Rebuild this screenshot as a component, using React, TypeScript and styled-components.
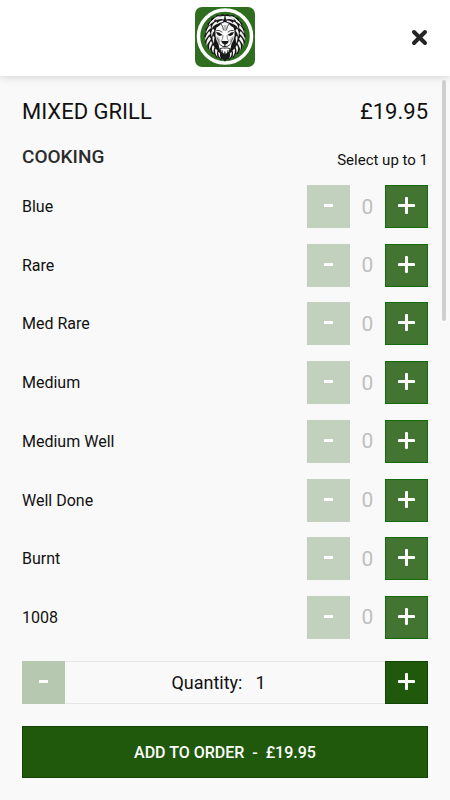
import React, { useState } from "react";
import styled, { createGlobalStyle } from "styled-components";

const GlobalStyle = createGlobalStyle`
  *, *::before, *::after { box-sizing: border-box; }
  body {
    margin: 0;
    background: #f9f9f9;
    color: #111;
    font-family: Roboto, "Liberation Sans", sans-serif;
  }
  h1, h2, p, ul { margin: 0; padding: 0; }
  button { font-family: inherit; cursor: pointer; }
  button:disabled { cursor: default; }
`;

const Page = styled.div`
  display: flex;
  flex-direction: column;
  min-height: 100vh;
`;

const Header = styled.header`
  display: grid;
  grid-template-columns: 1fr auto 1fr;
  align-items: center;
  padding: 7px 20px 9px;
  background: #fff;
  box-shadow: 0 1px 8px rgba(0, 0, 0, 0.16);
`;

const LogoLink = styled.a`
  grid-column: 2;
  display: block;
  height: 60px;
`;

const CloseButton = styled.button`
  justify-self: end;
  display: flex;
  padding: 2px;
  border: 0;
  background: none;
`;

const Content = styled.main`
  position: relative;
  flex: 1;
  display: flex;
  flex-direction: column;
  padding: 21px 22px 22px;
`;

const ScrollThumb = styled.div`
  position: absolute;
  top: 4px;
  right: 4px;
  width: 4px;
  height: 241px;
  border-radius: 2px;
  background: #cfcfcf;
`;

const HeadingRow = styled.div`
  display: flex;
  justify-content: space-between;
  align-items: flex-end;
`;

const ProductTitle = styled.h1`
  font-size: 22px;
  line-height: 30px;
  font-weight: 400;
`;

const Price = styled.p`
  font-size: 22px;
  line-height: 30px;
`;

const GroupRow = styled(HeadingRow)`
  padding: 15px 0 13px;
`;

const GroupTitle = styled.h2`
  font-size: 19px;
  line-height: 30px;
  font-weight: 500;
  color: #2c2c2c;
`;

const Hint = styled.p`
  font-size: 15px;
  line-height: 24px;
`;

const Options = styled.ul`
  flex: 1;
  display: flex;
  flex-direction: column;
  justify-content: space-between;
  gap: 12px;
  list-style: none;
`;

const Option = styled.li`
  display: grid;
  grid-template-columns: 1fr 43px 35px 43px;
  align-items: center;
  font-size: 16px;
`;

const Count = styled.output`
  text-align: center;
  font-size: 21px;
  color: #bfbfbf;
`;

type Tone = "soft" | "strong";

const fills = {
  soft: { on: "#437431", edge: "#126b0d", off: "#c2d1bd" },
  strong: { on: "#20590b", edge: "#104503", off: "#b6c9b0" },
};

const StepButton = styled.button<{ $tone: Tone }>`
  display: flex;
  align-items: center;
  justify-content: center;
  width: 43px;
  height: 43px;
  padding: 0 0 2px;
  border: 1px solid ${({ $tone }) => fills[$tone].edge};
  background: ${({ $tone }) => fills[$tone].on};
  color: #fff;

  &:disabled {
    border-color: ${({ $tone }) => fills[$tone].off};
    background: ${({ $tone }) => fills[$tone].off};
  }
`;

const Quantity = styled.div`
  display: grid;
  grid-template-columns: 43px 1fr 43px;
  margin-top: 22px;
`;

const QuantityLabel = styled.div`
  display: flex;
  align-items: center;
  justify-content: center;
  gap: 13px;
  padding-right: 13px;
  border: solid #e6e6e6;
  border-width: 1px 0;
  font-size: 18px;
`;

const AddButton = styled.button`
  height: 52px;
  margin-top: 22px;
  padding: 0;
  border: 1px solid #104503;
  background: #20590b;
  color: #fff;
  font-size: 16px;
  font-weight: 500;
  white-space: pre;
`;

const PlusIcon = () => (
  <svg width="17" height="17" viewBox="0 0 17 17" aria-hidden="true">
    <path d="M8.5 1.3V15.7M1.3 8.5H15.7" stroke="currentColor" strokeWidth="3" strokeLinecap="round" />
  </svg>
);

const MinusIcon = () => (
  <svg width="9" height="3" viewBox="0 0 9 3" aria-hidden="true">
    <path d="M0 0H9V3H0Z" fill="currentColor" />
  </svg>
);

const CloseIcon = () => (
  <svg width="17" height="17" viewBox="0 0 17 17" aria-hidden="true">
    <path d="M3 3L14 14M14 3L3 14" stroke="#242424" strokeWidth="4" strokeLinecap="round" />
  </svg>
);

const LionHalf = () => (
  <g>
    <path
      fill="#161616"
      d="M60 16L54 14L51 17L43 16L41 20L33 22L31 28L25 33L26 38L20 45L23 49L18 59L22 62L20 72L25 75L26 84L31 85L34 94L39 94L43 102L47 100L51 106L55 103L60 109Z"
    />
    <g fill="#f2f2f2">
      <path d="M59 18Q47 17 41 27Q50 22 58 25Z" />
      <path d="M50 18Q38 19 34 30Q41 24 47 22Z" />
      <path d="M39 24Q29 28 27 39Q32 32 38 29Z" />
      <path d="M31 36Q23 42 22 53Q27 45 32 42Z" />
      <path d="M29 48Q21 55 20 67Q26 57 31 53Z" />
      <path d="M29 59Q22 66 23 77Q28 69 32 64Z" />
      <path d="M32 68Q26 75 29 86Q32 77 35 72Z" />
      <path d="M36 76Q31 84 37 93Q37 84 39 80Z" />
      <path d="M41 83Q38 90 45 101Q43 91 45 87Z" />
      <path d="M46 90Q46 97 52 104Q49 96 50 92Z" />
      <path d="M57 27Q47 26 43 35Q50 30 56 30Z" />
      <path d="M43 29Q34 32 33 44Q38 36 45 33Z" />
      <path d="M36 43Q31 49 33 60Q36 50 39 47Z" />
      <path d="M36 57Q33 64 38 73Q38 65 39 61Z" />
    </g>
    <path
      fill="#fafafa"
      d="M60 30L53 33L48 38L43 41L41 48L41 58L43 66L47 74L49 84L54 91L60 94Z"
    />
    <path fill="#bdbdbd" d="M42 58L47 60L51 66L49 74L45 67ZM57 36H60V48H58Z" />
    <g fill="none" stroke="#202020" strokeLinecap="round" strokeLinejoin="round">
      <path strokeWidth="1.6" d="M53 35Q56 40 57 46M43 47Q49 45 54 50" />
      <path strokeWidth="1" d="M56 57Q56 64 53 68M44 62L48 69M47 70L50 76" />
      <path strokeWidth="1.8" d="M60 76V79Q54 80 51 76M51 83Q56 81 60 82" />
      <path strokeWidth="2" d="M60 90V105M54 87Q54 94 57 100M50 83Q50 90 53 95" />
    </g>
    <path fill="#161616" d="M42 50L48 51L55 56L50 58L45 56Z" />
    <path fill="#161616" d="M60 68L53 68L54 72L60 76Z" />
  </g>
);

const LionLogo = () => (
  <svg width="60" height="60" viewBox="0 0 120 120" role="img" aria-label="Lion">
    <rect width="120" height="120" rx="14" fill="#2f6e20" />
    <circle cx="60" cy="59" r="53" fill="none" stroke="#fff" strokeWidth="7" />
    <LionHalf />
    <g transform="matrix(-1 0 0 1 120 0)">
      <LionHalf />
    </g>
  </svg>
);

const options = ["Blue", "Rare", "Med Rare", "Medium", "Medium Well", "Well Done", "Burnt", "1008"];
const unitPrice = 19.95;

export default function App() {
  const [selected, setSelected] = useState<string | null>(null);
  const [quantity, setQuantity] = useState(1);

  return (
    <>
      <GlobalStyle />
      <Page>
        <Header>
          <LogoLink href="#" aria-label="Home">
            <LionLogo />
          </LogoLink>
          <CloseButton type="button" aria-label="Close">
            <CloseIcon />
          </CloseButton>
        </Header>
        <Content>
          <ScrollThumb />
          <HeadingRow>
            <ProductTitle>MIXED GRILL</ProductTitle>
            <Price>£19.95</Price>
          </HeadingRow>
          <GroupRow>
            <GroupTitle>COOKING</GroupTitle>
            <Hint>Select up to 1</Hint>
          </GroupRow>
          <Options>
            {options.map((name) => (
              <Option key={name}>
                <span>{name}</span>
                <StepButton
                  type="button"
                  $tone="soft"
                  aria-label={`Remove ${name}`}
                  disabled={selected !== name}
                  onClick={() => setSelected(null)}
                >
                  <MinusIcon />
                </StepButton>
                <Count>{selected === name ? 1 : 0}</Count>
                <StepButton
                  type="button"
                  $tone="soft"
                  aria-label={`Add ${name}`}
                  onClick={() => setSelected(name)}
                >
                  <PlusIcon />
                </StepButton>
              </Option>
            ))}
          </Options>
          <Quantity>
            <StepButton
              type="button"
              $tone="strong"
              aria-label="Decrease quantity"
              disabled={quantity === 1}
              onClick={() => setQuantity(quantity - 1)}
            >
              <MinusIcon />
            </StepButton>
            <QuantityLabel>
              <span>Quantity:</span>
              <output>{quantity}</output>
            </QuantityLabel>
            <StepButton
              type="button"
              $tone="strong"
              aria-label="Increase quantity"
              onClick={() => setQuantity(quantity + 1)}
            >
              <PlusIcon />
            </StepButton>
          </Quantity>
          <AddButton type="button">
            {`ADD TO ORDER  -  £${(unitPrice * quantity).toFixed(2)}`}
          </AddButton>
        </Content>
      </Page>
    </>
  );
}
